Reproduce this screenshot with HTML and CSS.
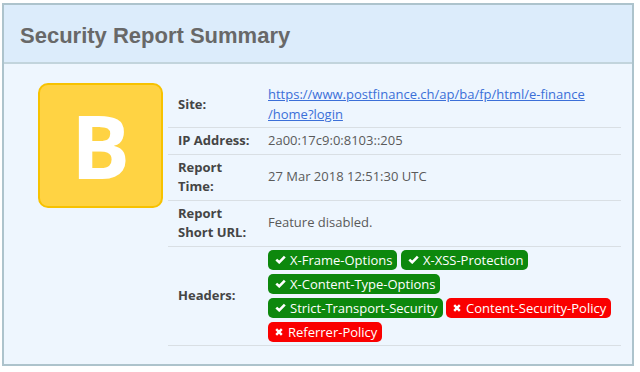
FILE: index.html
```html
<!DOCTYPE html>
<html lang="en">
<head>
  <meta charset="UTF-8">
  <title>Security Report Summary</title>
  <link rel="stylesheet" href="styles.css">
</head>
<body>

<div class="report-panel">
  <div class="report-header">
    <h2>Security Report Summary</h2>
  </div>

  <div class="report-body">
    <div class="grade-box">B</div>

    <table class="report-table">
      <tr>
        <th>Site:</th>
        <td><a href="https://www.postfinance.ch/ap/ba/fp/html/e-finance/home?login">https://www.postfinance.ch/ap/ba/fp/html/e-finance<wbr>/home?login</a></td>
      </tr>
      <tr>
        <th>IP Address:</th>
        <td>2a00:17c9:0:8103::205</td>
      </tr>
      <tr>
        <th>Report Time:</th>
        <td>27 Mar 2018 12:51:30 UTC</td>
      </tr>
      <tr>
        <th>Report Short URL:</th>
        <td>Feature disabled.</td>
      </tr>
      <tr>
        <th>Headers:</th>
        <td>
          <div class="header-list">
            <span class="badge good"><svg class="ico" viewBox="0 0 11 9"><path d="M1.3 4.6 L4.2 7.3 L9.8 1.6" /></svg>X-Frame-Options</span>
            <span class="badge good"><svg class="ico" viewBox="0 0 11 9"><path d="M1.3 4.6 L4.2 7.3 L9.8 1.6" /></svg>X-XSS-Protection</span>
            <span class="badge good"><svg class="ico" viewBox="0 0 11 9"><path d="M1.3 4.6 L4.2 7.3 L9.8 1.6" /></svg>X-Content-Type-Options</span>
            <span class="badge good"><svg class="ico" viewBox="0 0 11 9"><path d="M1.3 4.6 L4.2 7.3 L9.8 1.6" /></svg>Strict-Transport-Security</span>
            <span class="badge bad"><svg class="ico x" viewBox="0 0 8 8"><path d="M1.2 1.2 L6.8 6.8 M6.8 1.2 L1.2 6.8" /></svg>Content-Security-Policy</span>
            <span class="badge bad"><svg class="ico x" viewBox="0 0 8 8"><path d="M1.2 1.2 L6.8 6.8 M6.8 1.2 L1.2 6.8" /></svg>Referrer-Policy</span>
          </div>
        </td>
      </tr>
    </table>
  </div>
</div>

</body>
</html>
```

FILE: styles.css
```css
html, body {
  margin: 0;
  padding: 0;
  background: #fff;
}

.report-panel {
  width: 628px;
  margin: 3px 0 0 2px;
  border: 2px solid #adc3cc;
  background: #eef6fe;
  font-family: 'Open Sans', sans-serif;
}

.report-header {
  height: 57px;
  background: #dcecfb;
  border-bottom: 2px solid #c2d4dc;
  display: flex;
  align-items: center;
  padding-left: 16px;
}
.report-header h2 {
  margin: 0;
  padding-top: 4px;
  font-family: 'Liberation Sans', Arial, sans-serif;
  font-size: 22px;
  font-weight: bold;
  color: #686868;
}

.report-body {
  display: flex;
  align-items: flex-start;
  padding: 18px 0 18px 34px;
}

.grade-box {
  flex: none;
  width: 121px;
  height: 121px;
  margin-top: 1px;
  margin-right: 5px;
  border: 2px solid #f7c200;
  border-radius: 10px;
  background: #ffd343;
  color: #fff;
  font-size: 88px;
  font-weight: bold;
  line-height: 121px;
  text-align: center;
}

.report-table {
  width: 453px;
  border-collapse: collapse;
  font-size: 13px;
  line-height: 19.5px;
}
.report-table tr {
  border-bottom: 1px solid #d9dfe4;
}
.report-table th,
.report-table td {
  padding: 3px 4px 3px 10px;
  vertical-align: middle;
  text-align: left;
}
.report-table th {
  width: 76px;
  padding-right: 4px;
  color: #454545;
  font-weight: bold;
}
.report-table td {
  color: #5a5a5a;
}
.report-table a {
  color: #3b6fd8;
}

.header-list {
  display: flex;
  flex-wrap: wrap;
  gap: 4px 3.5px;
}

.badge {
  display: inline-flex;
  align-items: center;
  height: 20px;
  padding: 0 5px 0 7px;
  border-radius: 5px;
  color: #fff;
  font-size: 13px;
  line-height: 20px;
}
.badge.good {
  background: #0d880d;
}
.badge.bad {
  background: #fa0000;
}

.ico {
  width: 11px;
  height: 9px;
  margin-right: 4px;
  fill: none;
  stroke: #fff;
  stroke-width: 2.6;
}
.ico.x {
  width: 8px;
  height: 8px;
  margin-right: 5px;
  stroke-width: 2.4;
}
```
